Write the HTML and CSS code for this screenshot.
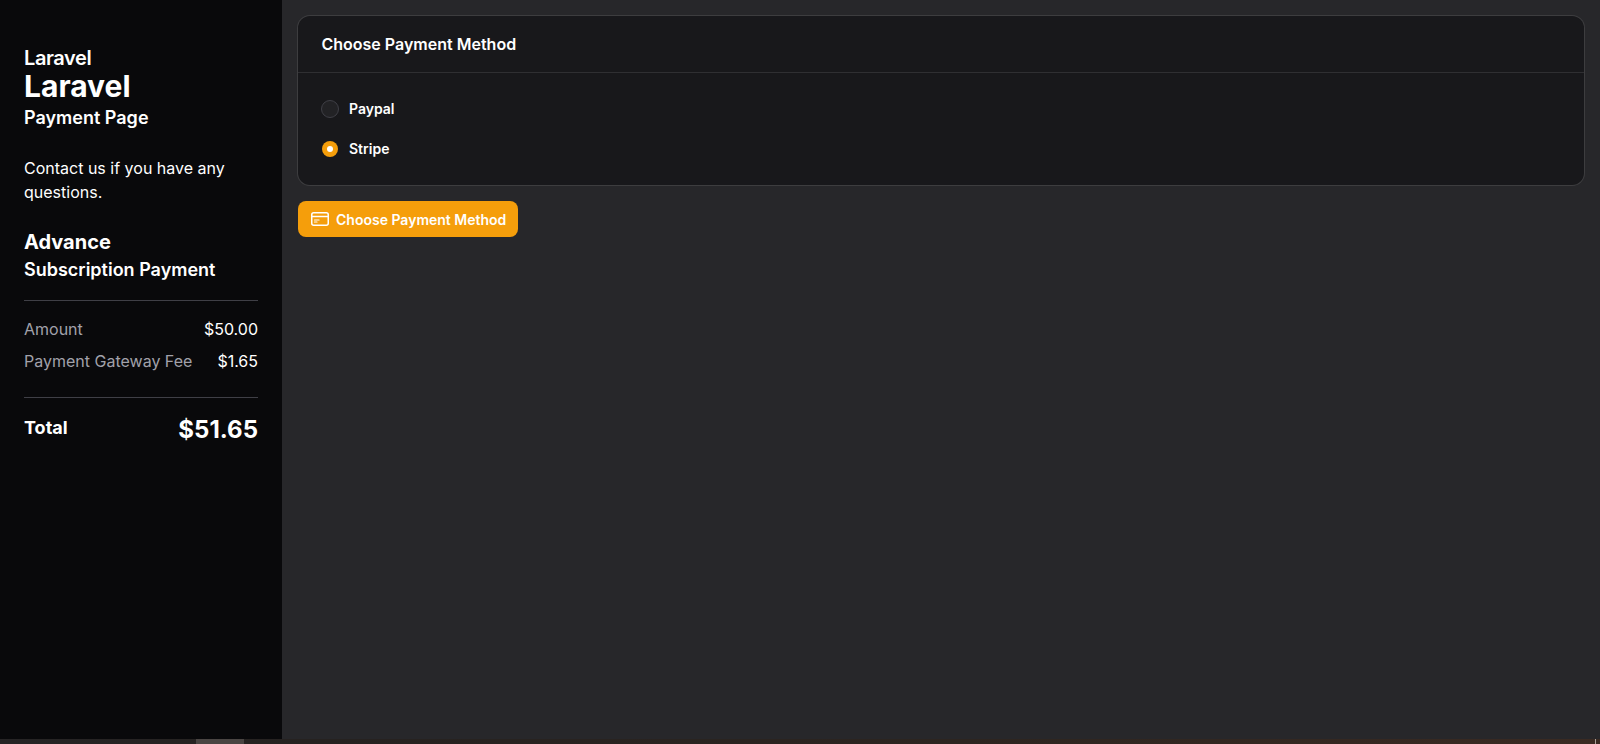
FILE: index.html
```html
<!DOCTYPE html>
<html lang="en">
<head>
<meta charset="utf-8">
<title>Laravel Payment Page</title>
<link rel="stylesheet" href="styles.css">
</head>
<body>
<div class="page">
  <aside class="sidebar">
    <div class="brand-small">Laravel</div>
    <div class="brand-large">Laravel</div>
    <div class="brand-sub">Payment Page</div>
    <p class="contact">Contact us if you have any questions.</p>
    <div class="plan">Advance</div>
    <div class="plan-type">Subscription Payment</div>
    <div class="lines">
      <div class="line"><span class="line-label">Amount</span><span class="line-value">$50.00</span></div>
      <div class="line"><span class="line-label">Payment Gateway Fee</span><span class="line-value">$1.65</span></div>
    </div>
    <div class="total">
      <span class="total-label">Total</span>
      <span class="total-value">$51.65</span>
    </div>
  </aside>
  <main class="main">
    <section class="card">
      <h2 class="card-title">Choose Payment Method</h2>
      <div class="card-body">
        <label class="option"><span class="radio"></span><span class="option-text">Paypal</span></label>
        <label class="option"><span class="radio radio-on"></span><span class="option-text">Stripe</span></label>
      </div>
    </section>
    <button class="pay-btn" type="button">
      <svg class="pay-icon" viewBox="0 0 20 20" fill="none" stroke="currentColor" stroke-width="1.5" stroke-linecap="round" stroke-linejoin="round">
        <rect x="1.75" y="3.75" width="16.5" height="12.5" rx="2"/>
        <path d="M1.75 7.5h16.5"/>
        <path d="M4.5 11h4.5M4.5 13h2.5" stroke-width="1.2"/>
      </svg>
      <span>Choose Payment Method</span>
    </button>
  </main>
</div>
<div class="strip"><div class="strip-thumb"></div><div class="strip-mark"></div></div>
</body>
</html>
```
FILE: styles.css
```css
* { box-sizing: border-box; }
html, body { margin: 0; padding: 0; height: 744px; overflow: hidden; }
body {
  font-family: Inter, "Liberation Sans", sans-serif;
  background: #27272a;
  color: #fff;
  display: flex;
  flex-direction: column;
}
.page { display: flex; height: 739px; }
.sidebar {
  width: 282px;
  flex: none;
  background: #09090b;
  padding: 46px 24px 0;
}
.brand-small { font-size: 20px; line-height: 24px; font-weight: 600; letter-spacing: -0.4px; }
.brand-large { font-size: 30px; line-height: 36px; font-weight: 700; margin-top: -2px; }
.brand-sub { font-size: 18px; line-height: 28px; font-weight: 600; }
.contact { margin: 24px 0 0; font-size: 16px; line-height: 24px; font-weight: 400; width: 216px; }
.plan { font-size: 20px; line-height: 28px; font-weight: 700; margin-top: 24px; }
.plan-type { font-size: 18px; line-height: 28px; font-weight: 600; }
.lines {
  margin-top: 16px;
  border-top: 1px solid #3f3f46;
  border-bottom: 1px solid #3f3f46;
  padding: 16px 0 24px;
  display: flex;
  flex-direction: column;
  gap: 8px;
}
.line { display: flex; justify-content: space-between; font-size: 16px; line-height: 24px; }
.line-label { color: #a1a1aa; }
.line-value { color: #fff; }
.total { display: flex; justify-content: space-between; align-items: flex-start; margin-top: 16px; }
.total-label { font-size: 18px; line-height: 28px; font-weight: 700; }
.total-value { font-size: 24px; line-height: 32px; font-weight: 700; }
.main { flex: 1; padding: 16px 16px 0; min-width: 0; }
.card {
  height: 169px;
  background: #18181b;
  border-radius: 12px;
  box-shadow: 0 0 0 1px rgba(255, 255, 255, 0.1);
}
.card-title {
  margin: 0;
  height: 57px;
  padding: 0 24px 0 23.5px;
  display: flex;
  align-items: center;
  font-size: 16px;
  font-weight: 600;
  border-bottom: 1px solid rgba(255, 255, 255, 0.1);
}
.card-body { padding: 24px 24px 0 23px; display: flex; flex-direction: column; gap: 16px; }
.option { display: flex; align-items: center; gap: 10px; height: 24px; }
.radio {
  width: 18px;
  height: 18px;
  border-radius: 50%;
  background: #222225;
  border: 1px solid #3f3f46;
}
.radio-on {
  border: 0;
  margin-left: 1px;
  margin-right: 1px;
  width: 16px;
  height: 16px;
  background: #f59e0b;
  position: relative;
}
.radio-on::after {
  content: "";
  position: absolute;
  left: 5px;
  top: 5px;
  width: 6px;
  height: 6px;
  border-radius: 50%;
  background: #fff;
}
.option-text { font-size: 14px; line-height: 20px; font-weight: 600; }
.pay-btn {
  margin-top: 16px;
  height: 36px;
  padding: 0 12px;
  background: #f59e0b;
  color: #fff;
  border: 0;
  border-radius: 8px;
  display: flex;
  align-items: center;
  gap: 6px;
  font-family: inherit;
  font-size: 14px;
  font-weight: 600;
}
.pay-icon { width: 20px; height: 20px; flex: none; }
.strip {
  height: 5px;
  flex: none;
  position: relative;
  background: linear-gradient(90deg, #262425 0%, #262220 20%, #2d2520 60%, #3a2a22 100%);
}
.strip-thumb { position: absolute; left: 196px; top: 0; width: 48px; height: 5px; background: #4a4543; }
.strip-mark { position: absolute; left: 1595px; top: 0; width: 1px; height: 5px; background: #a89f98; }
```
